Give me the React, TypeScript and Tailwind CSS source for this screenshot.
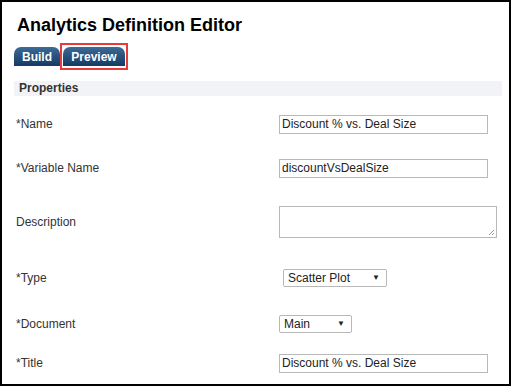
import React from "react";

const font = { fontFamily: '"Liberation Sans", Arial, sans-serif' };

function Row({ label, h, children, pl = "pl-[277px]" }: { label: string; h: string; children: React.ReactNode; pl?: string }) {
  return (
    <div className={`relative flex items-center ${h}`}>
      <div className="absolute left-[14px] text-[12px] text-[#333]">{label}</div>
      <div className={pl}>{children}</div>
    </div>
  );
}

function TextBox({ value, w = "w-[209px]" }: { value: string; w?: string }) {
  return (
    <div className={`${w} h-[19px] border border-[#b8b8b8] bg-white px-[2px] text-[12px] leading-[17px] text-[#222]`}>{value}</div>
  );
}

function Select({ value, w }: { value: string; w: string }) {
  return (
    <div className={`${w} h-[18px] border border-[#b8b8b8] rounded-[2px] bg-white flex items-center justify-between pl-[4px] pr-[6px] text-[12px] text-[#222]`}>
      <span>{value}</span>
      <span className="text-[8px] text-[#222]">▼</span>
    </div>
  );
}

export default function App() {
  return (
    <div style={font} className="w-[511px] h-[386px] border-2 border-black bg-white overflow-hidden">
      <div className="pl-[15px] pt-[12px] text-[18px] font-bold leading-[22px] text-black">Analytics Definition Editor</div>
      <div className="flex items-end pl-[12px] mt-[11px] h-[19px] gap-[3px]">
        <div className="h-[19px] w-[46px] justify-center rounded-t-[7px] bg-gradient-to-b from-[#3d6a97] to-[#153b63] text-white text-[12px] font-bold flex items-center">Build</div>
        <div className="relative">
          <div className="h-[19px] w-[62px] justify-center rounded-t-[7px] bg-gradient-to-b from-[#3d6a97] to-[#153b63] text-white text-[12px] font-bold flex items-center">Preview</div>
          <div className="absolute -left-[3px] -top-[4px] -right-[3px] -bottom-[4px] border-2 border-[#e83a3a]"></div>
        </div>
      </div>
      <div className="ml-[12px] mr-[7px] mt-[15px] h-[15px] bg-[#f2f3f7] pl-[5px] text-[12px] font-bold leading-[15px] text-[#333]">Properties</div>
      <div className="mt-[16px]">
        <Row label="*Name" h="h-[24px]"><TextBox value="Discount % vs. Deal Size" /></Row>
        <div className="h-[20px]"></div>
        <Row label="*Variable Name" h="h-[24px]"><TextBox value="discountVsDealSize" /></Row>
        <div className="h-[26px]"></div>
        <Row label="Description" h="h-[32px]">
          <div className="relative w-[218px] h-[32px] border border-[#b8b8b8] bg-white">
            <svg className="absolute right-[1px] bottom-[1px]" width="7" height="7" viewBox="0 0 7 7">
              <path d="M1 6 L6 1 M4 6 L6 4" stroke="#999" strokeWidth="1" />
            </svg>
          </div>
        </Row>
        <div className="h-[28px]"></div>
        <Row label="*Type" h="h-[24px]" pl="pl-[281px]"><Select value="Scatter Plot" w="w-[104px]" /></Row>
        <div className="h-[22px]"></div>
        <Row label="*Document" h="h-[24px]"><Select value="Main" w="w-[73px]" /></Row>
        <div className="h-[15px]"></div>
        <Row label="*Title" h="h-[24px]"><TextBox value="Discount % vs. Deal Size" /></Row>
      </div>
    </div>
  );
}
